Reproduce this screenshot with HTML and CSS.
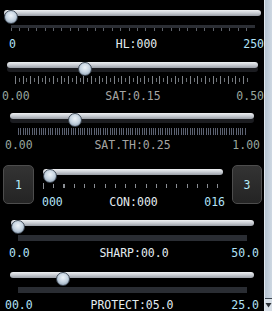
FILE: index.html
```html
<!DOCTYPE html>
<html lang="en">
<head>
    <meta charset="UTF-8">
    <meta name="viewport" content="width=device-width, initial-scale=1.0">
    <title>Image Adjust</title>
    <link rel="stylesheet" href="styles.css">
</head>
<body>
    <div class="panel">
        <div class="controls">

            <!-- hue limit -->
            <div class="ctl ctl-hl">
                <div class="slider"><div class="track"></div><div class="thumb" style="--v:0"></div></div>
                <div class="scale scale-hl"></div>
                <div class="labels"><span class="min">0</span><span class="name">HL:000</span><span class="max">250</span></div>
            </div>

            <!-- saturation -->
            <div class="ctl ctl-sat dim">
                <div class="slider"><div class="track shadowed"></div><div class="thumb" style="--v:0.3"></div></div>
                <div class="scale scale-sat"></div>
                <div class="labels"><span class="min">0.00</span><span class="name">SAT:0.15</span><span class="max">0.50</span></div>
            </div>

            <!-- saturation threshold -->
            <div class="ctl ctl-satth dim">
                <div class="slider"><div class="track shadowed"></div><div class="thumb" style="--v:0.25"></div></div>
                <div class="scale scale-satth"></div>
                <div class="labels"><span class="min">0.00</span><span class="name">SAT.TH:0.25</span><span class="max">1.00</span></div>
            </div>

            <!-- contrast with step buttons -->
            <div class="ctl ctl-con">
                <div class="btn btn-left">1</div>
                <div class="con-body">
                    <div class="slider"><div class="track"></div><div class="thumb" style="--v:0"></div></div>
                    <div class="scale scale-con"></div>
                    <div class="labels"><span class="min">000</span><span class="name">CON:000</span><span class="max">016</span></div>
                </div>
                <div class="btn btn-right">3</div>
            </div>

            <!-- sharpness -->
            <div class="ctl ctl-sharp">
                <div class="slider"><div class="track"></div><div class="thumb" style="--v:0"></div></div>
                <div class="bar"></div>
                <div class="labels"><span class="min">0.0</span><span class="name">SHARP:00.0</span><span class="max">50.0</span></div>
            </div>

            <!-- protect -->
            <div class="ctl ctl-protect">
                <div class="slider"><div class="track"></div><div class="thumb" style="--v:0.2"></div></div>
                <div class="bar"></div>
                <div class="labels"><span class="min">00.0</span><span class="name">PROTECT:05.0</span><span class="max">25.0</span></div>
            </div>
        </div>

        <div class="scrollbar">
            <div class="sb-down">
                <svg width="7" height="11" viewBox="0 0 7 11"><polygon points="0.5,4 6.5,4 3.5,8.5" fill="#2b3036"/></svg>
            </div>
        </div>
    </div>
</body>
</html>
```

FILE: styles.css
```css
html, body {
    margin: 0;
    padding: 0;
    background: #000;
}
body {
    width: 272px;
    height: 311px;
    overflow: hidden;
    font-family: 'DejaVu Sans Mono', 'Liberation Mono', monospace;
    font-size: 11.5px;
    line-height: 12px;
}
.panel {
    display: flex;
    width: 272px;
    height: 311px;
}
.controls {
    width: 264px;
}

/* slider */
.slider {
    position: relative;
    height: 14px;
}
.track {
    margin-top: 4px;
    height: 6px;
    border-radius: 3px;
    background: linear-gradient(#eef0f2 0%, #c9cdd3 50%, #979ca4 100%);
}
.track.shadowed {
    box-shadow: 0 4px 0 #1b1c20;
}
.thumb {
    position: absolute;
    top: 0;
    left: calc((100% - 14px) * var(--v));
    width: 14px;
    height: 14px;
    box-sizing: border-box;
    border-radius: 50%;
    border: 1px solid #3e4854;
    background: radial-gradient(circle at 50% 38%, #eef3f8 0%, #c6d4e1 48%, #8093a7 100%);
}

/* scales under the sliders */
.scale-hl {
    margin: 1px 9px 0 11px;
    height: 6px;
    background:
        linear-gradient(#2b2e34, #2b2e34) top / 100% 3px no-repeat,
        repeating-linear-gradient(90deg, #5d6169 0 1px, transparent 1px 8.4px) bottom / 100% 4px no-repeat;
}
.scale-sat {
    margin: 0 13px 0 15px;
    height: 8px;
    background:
        repeating-linear-gradient(90deg, #7d8187 0 1px, transparent 1px 7.6px) top / 100% 8px no-repeat,
        repeating-linear-gradient(90deg, transparent 0 3.8px, #6b6f75 3.8px 4.8px, transparent 4.8px 7.6px) top 2px left 0 / 100% 4px no-repeat;
}
.scale-satth {
    margin: 1px 17px 0 18px;
    height: 7px;
    background: repeating-linear-gradient(90deg, #5c6272 0 1px, transparent 1px 2.29px);
}
.scale-con {
    margin: 0 7px 0 9px;
    height: 6px;
    background:
        repeating-linear-gradient(90deg, #8a8e94 0 1px, transparent 1px 10.25px) top 1px left 0 / 100% 4px no-repeat,
        linear-gradient(90deg, #8a8e94 0 1px, transparent 1px) top left / 100% 6px no-repeat;
}
.bar {
    margin: 1px 17px 0 18px;
    height: 6px;
    background: #2a2d33;
}

/* labels */
.labels {
    display: grid;
    grid-template-columns: 1fr auto 1fr;
    white-space: pre;
}
.labels .min {
    color: #b2e2f8;
}
.labels .name {
    color: #e4ecf0;
}
.labels .max {
    justify-self: end;
    color: #b2e2f8;
}
.dim .labels .min,
.dim .labels .max {
    color: #97a69e;
}
.dim .labels .name {
    color: #a5a5a3;
}

/* rows */
.ctl-hl {
    padding-top: 6px;
}
.ctl-hl .slider {
    margin: 0 3px 0 4px;
}
.ctl-hl .labels {
    margin-top: 7px;
    padding: 0 0 0 9px;
}

.ctl-sat {
    margin-top: 12px;
}
.ctl-sat .slider {
    margin: 0 6px 0 7px;
}
.ctl-sat .labels {
    margin-top: 6px;
    padding: 0 0 0 2px;
}

.ctl-satth {
    margin-top: 11px;
}
.ctl-satth .slider {
    margin: 0 10px;
}
.ctl-satth .labels {
    margin-top: 4px;
    padding: 0 4px 0 5px;
}

.ctl-con {
    margin-top: 14px;
    display: flex;
    align-items: flex-start;
}
.btn {
    height: 39px;
    box-sizing: border-box;
    border: 1px solid #4d4d4d;
    border-radius: 5px;
    background: linear-gradient(#333333, #242424);
    color: #b4ecfb;
    display: flex;
    align-items: center;
    justify-content: center;
}
.btn-left {
    width: 31px;
    margin-left: 3px;
}
.btn-right {
    width: 30px;
    margin-right: 2px;
}
.con-body {
    flex: 1;
}
.ctl-con .slider {
    margin: 2px 9px 0 9px;
}
.ctl-con .labels {
    margin-top: 7px;
    padding: 0 7px 0 8px;
}

.ctl-sharp {
    margin-top: 12px;
}
.ctl-sharp .slider {
    margin: 0 10px 0 11px;
}
.ctl-sharp .labels {
    margin-top: 6px;
    padding: 0 5px 0 9px;
}

.ctl-protect {
    margin-top: 13px;
}
.ctl-protect .slider {
    margin: 0 10px;
}
.ctl-protect .labels {
    margin-top: 6px;
    padding: 0 5px;
}

/* scrollbar strip */
.scrollbar {
    width: 8px;
    box-sizing: border-box;
    border-left: 1px solid #e2eaf2;
    background: linear-gradient(90deg, #b6c4d2, #cfd9e3);
    display: flex;
    flex-direction: column;
    justify-content: flex-end;
}
.sb-down {
    height: 12px;
    border-top: 1px solid #3e4852;
    background: #d6dee6;
}
.sb-down svg {
    display: block;
}
```
